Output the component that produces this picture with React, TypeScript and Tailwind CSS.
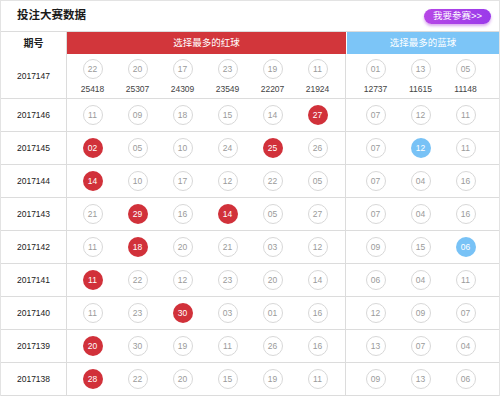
import React from "react";

type Ball = { n: string; hl?: boolean };
type Row = { id: string; red: Ball[]; blue: Ball[] };

const mk = (s: string, hl: number[] = []): Ball[] =>
  s.split(" ").map((n, i) => ({ n, hl: hl.includes(i) }));

const rows: Row[] = [
  { id: "2017146", red: mk("11 09 18 15 14 27", [5]), blue: mk("07 12 11") },
  { id: "2017145", red: mk("02 05 10 24 25 26", [0, 4]), blue: mk("07 12 11", [1]) },
  { id: "2017144", red: mk("14 10 17 12 22 05", [0]), blue: mk("07 04 16") },
  { id: "2017143", red: mk("21 29 16 14 05 27", [1, 3]), blue: mk("07 04 16") },
  { id: "2017142", red: mk("11 18 20 21 03 12", [1]), blue: mk("09 15 06", [2]) },
  { id: "2017141", red: mk("11 22 12 23 20 14", [0]), blue: mk("06 04 11") },
  { id: "2017140", red: mk("11 23 30 03 01 16", [2]), blue: mk("12 09 07") },
  { id: "2017139", red: mk("20 30 19 11 26 16", [0]), blue: mk("13 07 04") },
  { id: "2017138", red: mk("28 22 20 15 19 11", [0]), blue: mk("09 13 06") },
];

const firstRed = mk("22 20 17 23 19 11");
const firstRedCounts = ["25418", "25307", "24309", "23549", "22207", "21924"];
const firstBlue = mk("01 13 05");
const firstBlueCounts = ["12737", "11615", "11148"];

function Circle({ b, color }: { b: Ball; color: "red" | "blue" }) {
  if (b.hl) {
    return (
      <div
        className={
          "w-[20px] h-[20px] rounded-full flex items-center justify-center text-white text-[8.5px] leading-none " +
          (color === "red" ? "bg-[#d1313a]" : "bg-[#78c2f6]")
        }
      >
        {b.n}
      </div>
    );
  }
  return (
    <div className="w-[20px] h-[20px] rounded-full border border-[#d8d8d8] flex items-center justify-center text-[#9a9a9a] text-[8.5px] leading-none bg-white">
      {b.n}
    </div>
  );
}

export default function App() {
  return (
    <div
      className="w-[500px] h-[398px] bg-white overflow-hidden"
      style={{ fontFamily: '"Liberation Sans", "Noto Sans CJK SC", sans-serif' }}
    >
      <div className="w-[500px] border border-[#e3e3e3] border-b-0">
        {/* title */}
        <div className="h-[30px] flex items-center justify-between pl-[16px] pr-[8px]">
          <div className="text-[11.5px] font-bold text-[#1a1a1a] leading-none">投注大赛数据</div>
          <div className="w-[67px] h-[15px] rounded-full bg-gradient-to-r from-[#b646e6] to-[#9a3aea] shadow-[0_2px_3px_rgba(170,60,220,0.45)] flex items-center justify-center text-white text-[9.5px] leading-none">
            我要参赛&gt;&gt;
          </div>
        </div>
        {/* header */}
        <div className="h-[23px] flex border-t border-[#dcdcdc]">
          <div className="w-[66px] border-r border-[#dcdcdc] flex items-center justify-center text-[10px] font-bold text-[#222]">
            期号
          </div>
          <div className="w-[279px] bg-[#d2363b] flex items-center justify-center text-white text-[9.5px]">
            选择最多的红球
          </div>
          <div className="w-[1px] bg-white" />
          <div className="flex-1 bg-[#7cc5f7] flex items-center justify-center text-white text-[9.5px]">
            选择最多的蓝球
          </div>
        </div>
        {/* first row */}
        <div className="h-[45px] flex border-b border-[#dcdcdc]">
          <div className="w-[66px] border-r border-[#dcdcdc] flex items-center justify-center text-[8.5px] text-[#222]">
            2017147
          </div>
          <div className="w-[279px] border-r border-[#dcdcdc] pl-[3px] pt-[5px] grid grid-cols-[repeat(6,45px)]">
            {firstRed.map((b, i) => (
              <div key={i} className="flex flex-col items-center">
                <Circle b={b} color="red" />
                <div className="mt-[5px] text-[8.5px] leading-[10px] text-[#444]">{firstRedCounts[i]}</div>
              </div>
            ))}
          </div>
          <div className="flex-1 pl-[7px] pt-[5px] grid grid-cols-[repeat(3,45px)]">
            {firstBlue.map((b, i) => (
              <div key={i} className="flex flex-col items-center">
                <Circle b={b} color="blue" />
                <div className="mt-[5px] text-[8.5px] leading-[10px] text-[#444]">{firstBlueCounts[i]}</div>
              </div>
            ))}
          </div>
        </div>
        {rows.map((r) => (
          <div key={r.id} className="h-[33px] flex border-b border-[#dcdcdc]">
            <div className="w-[66px] border-r border-[#dcdcdc] flex items-center justify-center text-[8.5px] text-[#222]">
              {r.id}
            </div>
            <div className="w-[279px] border-r border-[#dcdcdc] pl-[3px] grid grid-cols-[repeat(6,45px)] items-center">
              {r.red.map((b, i) => (
                <div key={i} className="flex justify-center">
                  <Circle b={b} color="red" />
                </div>
              ))}
            </div>
            <div className="flex-1 pl-[7px] grid grid-cols-[repeat(3,45px)] items-center">
              {r.blue.map((b, i) => (
                <div key={i} className="flex justify-center">
                  <Circle b={b} color="blue" />
                </div>
              ))}
            </div>
          </div>
        ))}
      </div>
    </div>
  );
}
